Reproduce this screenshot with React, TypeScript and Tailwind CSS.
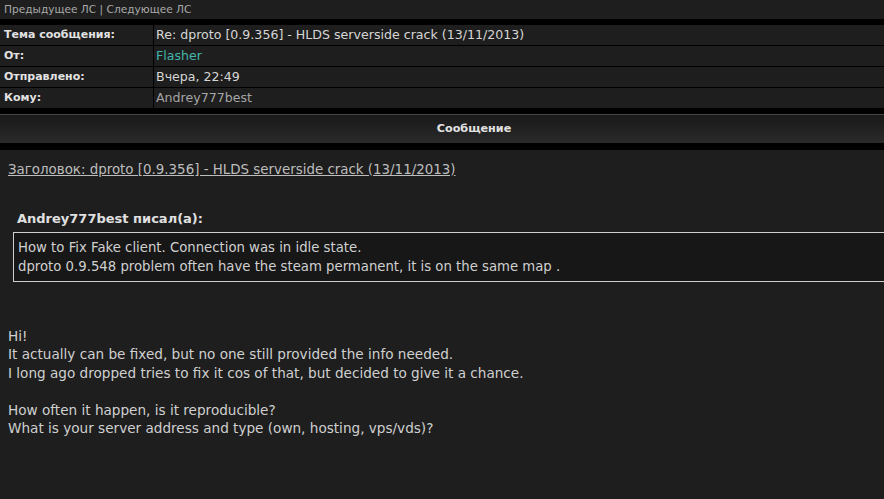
import React from "react";

const font = { fontFamily: '"DejaVu Sans", Verdana, sans-serif' };

function Row({ label, children, last }: { label: string; children: React.ReactNode; last?: boolean }) {
  return (
    <div className={`flex h-[20px] ${last ? "" : "mb-px"}`}>
      <div className="w-[153px] shrink-0 bg-[#1e1e1e] pl-[4px] flex items-center text-[11px] font-bold text-[#e2e2e2]">
        {label}
      </div>
      <div className="w-px bg-black shrink-0" />
      <div className="flex-1 bg-[#1e1e1e] pl-[2px] flex items-center text-[12.6px] pt-px">{children}</div>
    </div>
  );
}

export default function App() {
  return (
    <div className="w-[884px] h-[499px] overflow-hidden bg-black" style={font}>
      <div className="w-[948px]">
        <div className="h-[19px] bg-[#1e1e1e] pl-[4px] flex items-center text-[10.6px] text-[#a9a9a9] pt-px">
          Предыдущее ЛС | Следующее ЛС
        </div>
        <div className="mt-[6px]">
          <Row label="Тема сообщения:">
            <span className="text-[#d6d6d6]">Re: dproto [0.9.356] - HLDS serverside crack (13/11/2013)</span>
          </Row>
          <Row label="От:">
            <span className="text-[#45b3aa]">Flasher</span>
          </Row>
          <Row label="Отправлено:">
            <span className="text-[#d6d6d6]">Вчера, 22:49</span>
          </Row>
          <Row label="Кому:" last>
            <span className="text-[#a5a5a5]">Andrey777best</span>
          </Row>
        </div>
        <div className="mt-[6px] border-t border-[#464646] h-[29px] bg-gradient-to-b from-[#191919] to-[#2a2a2a] flex items-center justify-center text-[11.2px] font-bold text-[#e2e2e2]">
          Сообщение
        </div>
        <div className="mt-[7px] bg-[#1e1e1e] h-[400px] pt-[12px] text-[13.6px] text-[#d0d0d0]">
          <div className="pl-[8px] leading-[16px] text-[13.4px]">
            <span className="underline text-[#bdbdbd]">Заголовок: dproto [0.9.356] - HLDS serverside crack (13/11/2013)</span>
          </div>
          <div className="mt-[33px] pl-[17px] font-bold text-[13px] text-[#e0e0e0] leading-[16px]">Andrey777best писал(а):</div>
          <div className="mt-[5px] ml-[13px] border border-[#cfcfcf] bg-[#171717] px-[4px] pt-[5px] pb-[5px] leading-[19px] text-[13.25px]">
            <div>How to Fix Fake client. Connection was in idle state.</div>
            <div>dproto 0.9.548 problem often have the steam permanent, it is on the same map .</div>
          </div>
          <div className="mt-[45px] pl-[8px] leading-[18.4px]">
            <div>Hi!</div>
            <div>It actually can be fixed, but no one still provided the info needed.</div>
            <div>I long ago dropped tries to fix it cos of that, but decided to give it a chance.</div>
            <div className="h-[18.4px]" />
            <div>How often it happen, is it reproducible?</div>
            <div>What is your server address and type (own, hosting, vps/vds)?</div>
          </div>
        </div>
      </div>
    </div>
  );
}
